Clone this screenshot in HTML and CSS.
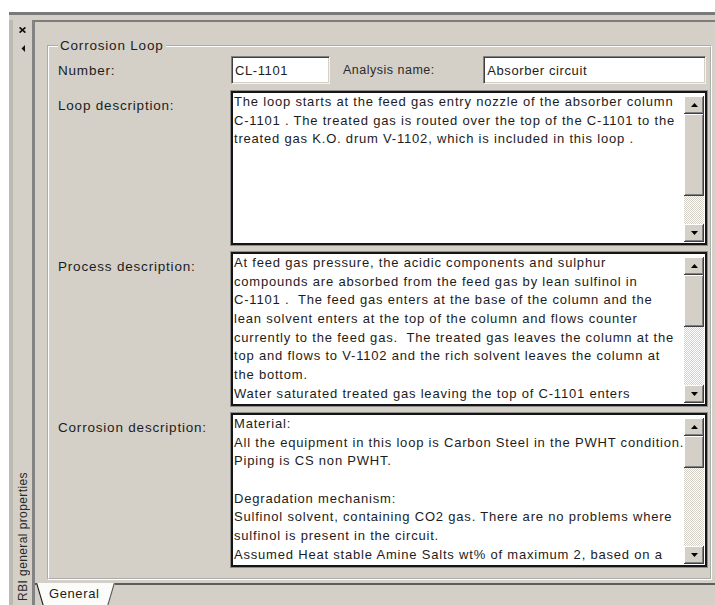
FILE: index.html
```html
<!DOCTYPE html>
<html lang="en">
<head>
<meta charset="utf-8">
<title>RBI general properties</title>
<link rel="stylesheet" href="styles.css">
</head>
<body>
<div class="frame">
  <aside class="dock">
    <div class="dock-buttons">
      <svg class="dock-close" width="7" height="6" viewBox="0 0 7 6" aria-hidden="true"><path d="M0.6 0.4L6.4 5.6M6.4 0.4L0.6 5.6" stroke="#111" stroke-width="1.7" fill="none"/></svg>
      <svg class="dock-pin" width="4" height="7" viewBox="0 0 4 7" aria-hidden="true"><path d="M4 0L0.5 3.5L4 7Z" fill="#111"/></svg>
    </div>
    <div class="dock-title">RBI general properties</div>
  </aside>

  <main class="page">
    <div class="page-body">
      <fieldset class="group">
        <legend>Corrosion Loop</legend>
        <div class="form">
          <div class="lbl lbl-mid">Number:</div>
          <div class="row-ids">
            <div class="edit edit-number">CL-1101</div>
            <span class="lbl-inline">Analysis name:</span>
            <div class="edit edit-name">Absorber circuit</div>
          </div>

          <div class="lbl">Loop description:</div>
          <div class="memo">
            <div class="memo-text">
              <div class="ln">The loop starts at the feed gas entry nozzle of the absorber column</div>
              <div class="ln">C-1101 . The treated gas is routed over the top of the C-1101 to the</div>
              <div class="ln">treated gas K.O. drum V-1102, which is included in this loop .</div>
            </div>
            <div class="vscroll">
              <div class="sb-btn"><svg width="7" height="4" viewBox="0 0 7 4"><path d="M0 4L3.5 0L7 4Z" fill="#000"/></svg></div>
              <div class="sb-thumb thumb-loop"></div>
              <div class="sb-track"></div>
              <div class="sb-btn"><svg width="7" height="4" viewBox="0 0 7 4"><path d="M0 0L3.5 4L7 0Z" fill="#000"/></svg></div>
            </div>
          </div>

          <div class="lbl">Process description:</div>
          <div class="memo">
            <div class="memo-text">
              <div class="ln">At feed gas pressure, the acidic components and sulphur</div>
              <div class="ln">compounds are absorbed from the feed gas by lean sulfinol in</div>
              <div class="ln">C-1101 .  The feed gas enters at the base of the column and the</div>
              <div class="ln">lean solvent enters at the top of the column and flows counter</div>
              <div class="ln">currently to the feed gas.  The treated gas leaves the column at the</div>
              <div class="ln">top and flows to V-1102 and the rich solvent leaves the column at</div>
              <div class="ln">the bottom.</div>
              <div class="ln">Water saturated treated gas leaving the top of C-1101 enters</div>
            </div>
            <div class="vscroll">
              <div class="sb-btn"><svg width="7" height="4" viewBox="0 0 7 4"><path d="M0 4L3.5 0L7 4Z" fill="#000"/></svg></div>
              <div class="sb-thumb thumb-process"></div>
              <div class="sb-track"></div>
              <div class="sb-btn"><svg width="7" height="4" viewBox="0 0 7 4"><path d="M0 0L3.5 4L7 0Z" fill="#000"/></svg></div>
            </div>
          </div>

          <div class="lbl">Corrosion description:</div>
          <div class="memo">
            <div class="memo-text">
              <div class="ln">Material:</div>
              <div class="ln">All the equipment in this loop is Carbon Steel in the PWHT condition.</div>
              <div class="ln">Piping is CS non PWHT.</div>
              <div class="ln"> </div>
              <div class="ln">Degradation mechanism:</div>
              <div class="ln">Sulfinol solvent, containing CO2 gas. There are no problems where</div>
              <div class="ln">sulfinol is present in the circuit.</div>
              <div class="ln">Assumed Heat stable Amine Salts wt% of maximum 2, based on a</div>
            </div>
            <div class="vscroll">
              <div class="sb-btn"><svg width="7" height="4" viewBox="0 0 7 4"><path d="M0 4L3.5 0L7 4Z" fill="#000"/></svg></div>
              <div class="sb-thumb thumb-corrosion"></div>
              <div class="sb-track"></div>
              <div class="sb-btn"><svg width="7" height="4" viewBox="0 0 7 4"><path d="M0 0L3.5 4L7 0Z" fill="#000"/></svg></div>
            </div>
          </div>
        </div>
      </fieldset>
    </div>

    <div class="tabs">
      <div class="tab">
        <svg class="tab-shape" width="80" height="26" viewBox="0 0 80 26" aria-hidden="true">
          <path d="M0 0H79L71 26H8Z" fill="#fbfbfa"/>
          <path d="M0.6 0L8 25" stroke="#1a1a1a" stroke-width="1.1" fill="none"/>
          <path d="M78.4 0L71 25" stroke="#555" stroke-width="1.1" fill="none"/>
        </svg>
        <span class="tab-label">General</span>
      </div>
    </div>
  </main>
</div>
</body>
</html>
```

FILE: styles.css
```css
* {
  box-sizing: border-box;
}

html,
body {
  margin: 0;
  padding: 0;
}

body {
  width: 715px;
  height: 605px;
  overflow: hidden;
  background: #ffffff;
  font-family: "Liberation Sans", Arial, sans-serif;
  color: #1c1c1c;
}

/* docked tool window */
.frame {
  display: flex;
  height: 593px;
  margin: 12px 0 0 9px;
  border-top: 3px solid #7a7a7a;
  background: #d4d0c8;
}

/* collapsed side strip with close / pin buttons */
.dock {
  width: 23px;
  flex: none;
  margin-top: 5px;
  padding: 7px 0 4px;
  border-left: 4px solid #bdbab2;
  display: flex;
  flex-direction: column;
  justify-content: space-between;
  align-items: center;
}

.dock-buttons {
  display: flex;
  flex-direction: column;
  align-items: center;
  gap: 12px;
}

.dock-close,
.dock-pin {
  display: block;
}

.dock-title {
  writing-mode: vertical-rl;
  transform: rotate(180deg);
  font-size: 12px;
  letter-spacing: 0.4px;
  color: #2a2a2a;
  line-height: 14px;
}

/* property page */
.page {
  flex: 1;
  min-width: 0;
  margin-top: 5px;
  display: flex;
  flex-direction: column;
  border-top: 2px solid #7d7d7d;
  border-left: 3px solid #838383;
}

.page-body {
  height: 561px;
  flex: none;
  padding: 16px 3px 3px 12px;
}

.group {
  margin: 0;
  padding: 2px 10px 11px 9px;
  border: 2px groove #ffffff;
  min-width: 0;
}

.group legend {
  padding: 0 2px;
  font-size: 13.5px;
  line-height: 16px;
  letter-spacing: 0.8px;
}

.form {
  display: grid;
  grid-template-columns: 173px 1fr;
  grid-template-rows: 28px 154px 154px 154px;
  row-gap: 7px;
}

.lbl {
  font-size: 13.5px;
  letter-spacing: 0.8px;
  line-height: 18px;
  padding-top: 6px;
}

.lbl-mid {
  align-self: center;
  padding-top: 1px;
}

.row-ids {
  display: flex;
  align-items: center;
}

.lbl-inline {
  margin-left: 13px;
  font-size: 12.5px;
  letter-spacing: 0.5px;
  color: #2a2a2a;
}

/* sunken single-line edit */
.edit {
  height: 28px;
  padding: 0 3px;
  display: flex;
  align-items: center;
  background: #ffffff;
  font-size: 13px;
  letter-spacing: 0.6px;
  border-top: 1px solid #808080;
  border-left: 1px solid #808080;
  border-right: 1px solid #f4f3f0;
  border-bottom: 1px solid #f4f3f0;
  box-shadow: inset 1px 1px 0 #404040, inset -1px -1px 0 #d4d0c8;
}

.edit-number {
  width: 99px;
}

.edit-name {
  width: 223px;
  margin-left: auto;
  margin-right: 1px;
}

/* multi-line memo with scrollbar */
.memo {
  display: flex;
  min-height: 0;
  background: #ffffff;
  border: 2px solid #151515;
  box-shadow: 0 0 0 1px #8e8e8e;
}

.memo-text {
  flex: 1;
  min-width: 0;
  overflow: hidden;
  padding-left: 1px;
  font-size: 13px;
  letter-spacing: 0.8px;
  line-height: 18.7px;
}

.ln {
  white-space: pre;
  height: 18.7px;
}

.vscroll {
  width: 20px;
  flex: none;
  margin: 3px 1px 1px 0;
  display: flex;
  flex-direction: column;
  background: repeating-conic-gradient(#ffffff 0 25%, #d4d0c8 0 50%) 0 0 / 2px 2px;
}

.sb-btn,
.sb-thumb {
  flex: none;
  background: #d4d0c8;
  box-shadow:
    inset -1px -1px 0 #404040,
    inset 1px 1px 0 #ffffff,
    inset -2px -2px 0 #808080;
}

.sb-btn {
  height: 18px;
  display: flex;
  align-items: center;
  justify-content: center;
}

.sb-btn svg {
  display: block;
}

.sb-track {
  flex: 1;
}

.thumb-loop {
  height: 82px;
}

.thumb-process {
  height: 52px;
}

.thumb-corrosion {
  height: 32px;
}

/* bottom tab strip */
.tabs {
  height: 22px;
  flex: none;
  border-top: 2px solid #5c5c5c;
  display: flex;
}

.tab {
  position: relative;
  width: 80px;
  height: 26px;
  margin: -2px 0 0 1px;
}

.tab-shape {
  position: absolute;
  left: 0;
  top: 0;
}

.tab-label {
  position: relative;
  display: block;
  padding: 2px 0 0 13px;
  font-size: 13px;
  line-height: 18px;
  letter-spacing: 0.6px;
}
```
